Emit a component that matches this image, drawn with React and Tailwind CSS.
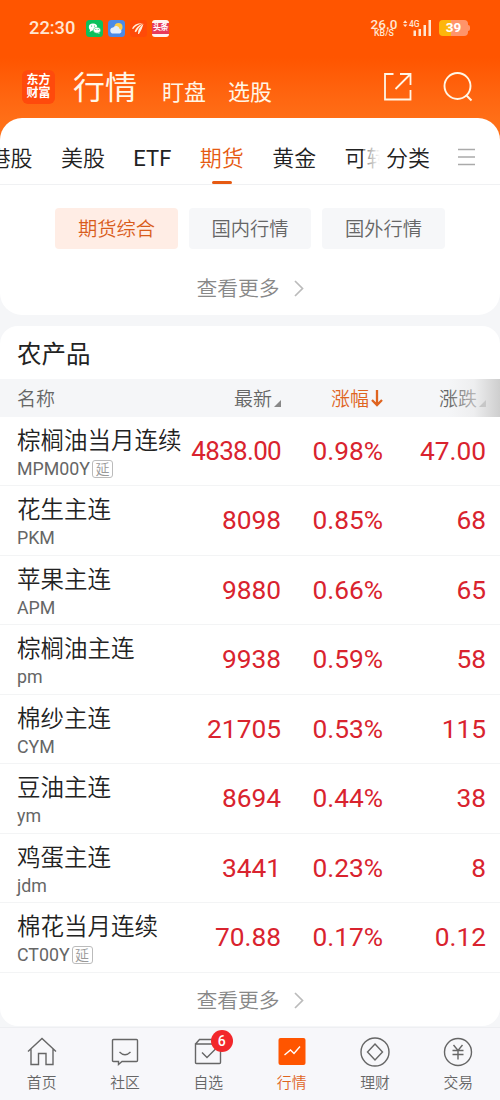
import React, { useState } from 'react';

const MARKET_TABS = ['港股', '美股', 'ETF', '期货', '黄金', '可转'];

const CATEGORIES = ['期货综合', '国内行情', '国外行情'];

const FUTURES = [
  { name: '棕榈油当月连续', code: 'MPM00Y', delayed: true, price: '4838.00', percent: '0.98%', change: '47.00' },
  { name: '花生主连', code: 'PKM', price: '8098', percent: '0.85%', change: '68' },
  { name: '苹果主连', code: 'APM', price: '9880', percent: '0.66%', change: '65' },
  { name: '棕榈油主连', code: 'pm', price: '9938', percent: '0.59%', change: '58' },
  { name: '棉纱主连', code: 'CYM', price: '21705', percent: '0.53%', change: '115' },
  { name: '豆油主连', code: 'ym', price: '8694', percent: '0.44%', change: '38' },
  { name: '鸡蛋主连', code: 'jdm', price: '3441', percent: '0.23%', change: '8' },
  { name: '棉花当月连续', code: 'CT00Y', delayed: true, price: '70.88', percent: '0.17%', change: '0.12' }
];

const StatusBar = () => (
  <div className="flex h-14 items-center pl-[29px] pr-[30px] text-[#ffe6d2]">
    <span className="w-[57px] text-[18.3px] leading-none font-medium">22:30</span>
    <div className="flex gap-[5px]">
      <svg className="h-[17px] w-[17px]" viewBox="0 0 17 17">
        <rect width="17" height="17" rx="3.5" fill="#0bc15c" />
        <ellipse cx="7" cy="7" rx="4.2" ry="3.6" fill="#fff" />
        <path d="M4.2 9.5 3.6 12 6.5 10.4zM12.5 12l1.2 1.9-2.8-1.2z" fill="#fff" />
        <ellipse cx="11" cy="10.2" rx="3.6" ry="3" fill="#fff" stroke="#0bc15c" strokeWidth=".5" />
        <g fill="#0bc15c">
          <circle cx="5.6" cy="6" r=".6" />
          <circle cx="8.5" cy="6" r=".6" />
          <circle cx="9.9" cy="9.5" r=".5" />
          <circle cx="12.2" cy="9.5" r=".5" />
        </g>
      </svg>
      <svg className="h-[17px] w-[17px]" viewBox="0 0 17 17">
        <rect width="17" height="17" rx="3.5" fill="#4b8ae6" />
        <circle cx="10.5" cy="7" r="4" fill="#ffce45" />
        <path d="M5.5 13.5a3 3 0 0 1-.4-6 3.6 3.6 0 0 1 6.5 1.4 2.4 2.4 0 0 1 .3 4.6z" fill="#e4eefb" />
      </svg>
      <svg className="h-[17px] w-[17px]" viewBox="0 0 17 17">
        <rect width="17" height="17" rx="3.5" fill="#ff4a08" />
        <g fill="#fff1df">
          <path d="M2 8.6Q4.5 3 12.5 3.3 6 5 3.2 9z" />
          <path d="M4.6 11.6Q6 6.3 13 3.4 8.5 7.2 6 12.3z" />
          <path d="M8 14Q7.5 8.4 13.5 3.7 12.3 9 9 14z" />
        </g>
      </svg>
      <div className="flex h-[17px] w-[17px] flex-col justify-center overflow-hidden rounded-[3px] bg-[#fff4f0]">
        <div className="flex h-[11px] items-center justify-center bg-[#e83b59] text-[8px] leading-none font-bold tracking-[-0.5px] whitespace-nowrap text-white">
          头条
        </div>
      </div>
    </div>
    <div className="ml-auto flex items-center">
      <div className="w-[28px] text-center font-medium">
        <div className="text-[13.5px] leading-[10px]">26.0</div>
        <div className="text-[8.8px] leading-[9px]">KB/S</div>
      </div>
      <svg className="ml-[4px] h-[18px] w-[31px]" viewBox="0 0 31 18" fill="#ffe6d2">
        <path d="M1 4 3.2 1.2 5.4 4zM1 5.5h4.4L3.2 8z" />
        <text x="7" y="8" fontSize="8.5" fontWeight="500">4G</text>
        <path d="M11.5 11.5h2.5v5.5h-2.5zM16.5 10h2.5v7h-2.5zM21.500 6h2.500v11h-2.500zM26.500 1h2.500v16h-2.500z" />
      </svg>
      <div className="ml-[6px] flex h-4 w-[29px] items-center justify-center rounded-[4px] bg-linear-to-r from-[#fdb60b] from-40% to-[#ff946a] to-40% text-[13.5px] leading-none font-bold text-white">
        39
      </div>
      <div className="h-[6px] w-[2px] rounded-r-sm bg-[#ff946a]" />
    </div>
  </div>
);

const TopNav = () => (
  <div className="flex h-[62px] items-end pr-[26px] pl-[22px] text-[#fff6e6]">
    <div className="mb-[14px] flex h-[34px] w-[33px] flex-col items-center justify-center rounded-[6px] bg-[#ff4a0c] text-[12px] leading-[13.5px] font-bold text-white">
      <span>东方</span>
      <span>财富</span>
    </div>
    <span className="mb-[11px] ml-[18px] text-[32px] leading-[38px]">行情</span>
    <span className="mb-[11px] ml-[25px] text-[22px] leading-7">盯盘</span>
    <span className="mb-[11px] ml-[22px] text-[22px] leading-7">选股</span>
    <svg className="mb-[17px] ml-auto h-[29px] w-[29px]" viewBox="0 0 29 29" fill="none" stroke="currentColor" strokeWidth="1.8">
      <path d="M10.5 2H2v25.5h25.5V18M12.5 17 27 2.5M17 2h10.5v11" />
    </svg>
    <svg className="mb-[15px] ml-[30px] h-[32px] w-[32px]" viewBox="0 0 32 32" fill="none" stroke="currentColor" strokeWidth="1.9">
      <circle cx="15.5" cy="15" r="13" />
      <path d="m24 24 5.5 5.5" />
    </svg>
  </div>
);

const MarketTabs = () => {
  const [active, setActive] = useState('期货');

  return (
    <div className="flex h-[67px] border-b border-[#f0f1f3] text-[22px] leading-[81px] text-[#222]">
      <div className="relative flex w-[380px] gap-[28.4px] overflow-hidden">
        {MARKET_TABS.map(tab => (
          <button
            key={tab}
            onClick={() => setActive(tab)}
            className={`relative shrink-0 first:-ml-[11.5px] ${tab === 'ETF' ? 'font-normal' : ''} ${active === tab ? 'text-[#e65a12]' : ''}`}
          >
            {tab}
            {active === tab && (
              <span className="absolute bottom-0 left-1/2 h-[3px] w-5 -translate-x-1/2 rounded-full bg-[#e65a12]" />
            )}
          </button>
        ))}
        <div className="absolute inset-y-0 right-0 w-[17px] bg-linear-to-r from-white/40 to-white" />
      </div>
      <span className="ml-[6px]">分类</span>
      <svg className="mt-[30px] ml-[28px] h-[18px] w-[17px]" viewBox="0 0 17 18" stroke="#aaa" strokeWidth="1.6">
        <path d="M0 1.5h17M0 9h17M0 16.5h17" />
      </svg>
    </div>
  );
};

const MoreLink = () => (
  <button className="flex w-full items-center justify-center text-[20.8px] leading-7 text-[#888]">
    查看更多
    <svg className="mb-px ml-[14px] h-[17px] w-[10px]" viewBox="0 0 10 17" fill="none" stroke="#bbb" strokeWidth="1.7">
      <path d="m1 1 7.5 7.5L1 16" />
    </svg>
  </button>
);

const SortCorner = () => (
  <svg className="mt-[8px] ml-[2px] h-[7px] w-[7px]" viewBox="0 0 7 7">
    <path d="M7 0v7H0z" fill="#888" />
  </svg>
);

const FuturesRow = ({ item }) => (
  <div className="flex h-[69.45px] border-b border-[#f3f4f5] pr-[14px] pl-[17px]">
    <div className="w-[166px] shrink-0 pt-[9px] whitespace-nowrap">
      <div className="text-[23.5px] leading-[31px] text-[#222]">{item.name}</div>
      <div className="flex items-center text-[17.8px] leading-[23px] font-normal text-[#666]">
        {item.code}
        {item.delayed && (
          <span className="mt-px ml-[2px] flex h-[18px] w-[21px] items-center justify-center rounded-[3px] border border-[#bbb] text-[14px] leading-none font-[350] text-[#999]">
            延
          </span>
        )}
      </div>
    </div>
    <div className="flex flex-1 text-right text-[26.3px] leading-[69px] font-normal text-[#d9232e]">
      <span className={`w-[98px] ${item.price.length > 6 ? 'text-[26px] tracking-[-0.7px]' : ''}`}>{item.price}</span>
      <span className="w-[102px]">{item.percent}</span>
      <span className="flex-1">{item.change}</span>
    </div>
  </div>
);

const NAV_ITEMS = [
  {
    label: '首页',
    icon: <path d="M1 14.5 15 1.5l14 13M4 12v15.5h7.5V16.5h7.5v11H26V12" />
  },
  {
    label: '社区',
    icon: (
      <>
        <path d="M3.500 2.500h23q1 0 1 1v20q0 1-1 1H12l-3.500 3v-3h-5q-1 0-1-1v-20q0-1 1-1z" />
        <path d="M9.500 15q5.500 5.500 11 0" />
      </>
    )
  },
  {
    label: '自选',
    badge: 6,
    icon: <path d="M2.5 7 6.5 2.5h17l4 4.5M2.5 7h25v18.5q0 1-1 1h-23q-1 0-1-1zM9 15.500l5 5 8.500-8.500" />
  },
  {
    label: '行情',
    icon: (
      <>
        <rect x="1.5" y="1" width="27" height="27" rx="2" fill="#ff5500" stroke="none" />
        <path d="m7.5 18 6-5 3.5 3.5L23 9.5" stroke="#fff" />
      </>
    )
  },
  {
    label: '理财',
    icon: (
      <>
        <circle cx="15" cy="15" r="14" />
        <path d="m15 7 7.5 8L15 23l-7.5-8z" />
      </>
    )
  },
  {
    label: '交易',
    icon: (
      <>
        <circle cx="15" cy="15" r="13.5" />
        <path d="m10.5 8 4.5 5.500L19.500 8M9.500 13.500h11M9.500 17.500h11M15 13.500V22.500" />
      </>
    )
  }
];

const BottomNav = () => {
  const [current, setCurrent] = useState('行情');

  return (
    <nav className="grid h-[73px] grid-cols-6 border-t border-[#eeeff2] bg-[#f7f7fa]">
      {NAV_ITEMS.map(({ label, icon, badge }) => (
        <button
          key={label}
          onClick={() => setCurrent(label)}
          className={`relative flex flex-col items-center pt-[9px] text-[14.8px] leading-5 ${current === label ? 'text-[#df641f]' : 'text-[#666]'}`}
        >
          <svg className="mb-[6px] h-[30px] w-[30px] shrink-0" viewBox="0 0 30 30" fill="none" stroke="currentColor" strokeWidth="1.4">
            {icon}
          </svg>
          {label}
          {badge && (
            <span className="absolute top-[2px] left-[44px] flex h-[22px] w-[22px] items-center justify-center rounded-full bg-[#f2272b] text-[14px] leading-none font-medium text-white">
              {badge}
            </span>
          )}
        </button>
      ))}
    </nav>
  );
};

const App = () => {
  const [category, setCategory] = useState('期货综合');

  return (
    <div className="flex h-[1100px] w-[500px] flex-col overflow-hidden bg-[#f5f6f8] font-['Roboto','Noto_Sans_CJK_SC',sans-serif] font-[350]">
      <header className="h-[145px] shrink-0 bg-linear-to-b from-[#ff5500] from-40% to-[#ff7018] to-85% font-normal">
        <StatusBar />
        <TopNav />
      </header>

      <section className="-mt-[27px] h-[197px] shrink-0 rounded-[22px] bg-white">
        <MarketTabs />
        <div className="flex justify-center gap-[11px] pt-[23px]">
          {CATEGORIES.map(item => (
            <button
              key={item}
              onClick={() => setCategory(item)}
              className={`h-[41px] w-[122.5px] rounded-[4px] pt-[3px] text-[19.3px] ${category === item ? 'bg-[#ffede5] text-[#d95c1c]' : 'bg-[#f6f7f9] text-[#666]'}`}
            >
              {item}
            </button>
          ))}
        </div>
        <div className="pt-[26px]">
          <MoreLink />
        </div>
      </section>

      <section className="mt-[11px] h-[700px] shrink-0 rounded-[18px] bg-white">
        <h2 className="h-[53px] pl-[17px] text-[24.5px] leading-[58px] font-normal text-[#222]">农产品</h2>
        <div className="relative flex h-[38px] items-center bg-[#f5f6f8] pt-[2px] pl-[17px] text-[19px] leading-none text-[#666]">
          <span className="w-[166px]">名称</span>
          <span className="flex w-[98px] items-center justify-end">最新<SortCorner /></span>
          <span className="flex w-[102px] items-center justify-end text-[#df641f]">
            涨幅
            <svg className="mb-[2px] ml-[2px] h-[18px] w-[12px]" viewBox="0 0 12 18" fill="none" stroke="currentColor" strokeWidth="2.3">
              <path d="M6 1v15M1 11l5 5 5-5" />
            </svg>
          </span>
          <span className="flex w-[103px] items-center justify-end">涨跌<SortCorner /></span>
          <div className="absolute inset-y-0 right-0 w-[52px] bg-linear-to-r from-[#f5f6f8]/0 via-[#e9e9ea]/60 to-[#cecece]" />
        </div>
        {FUTURES.map(item => <FuturesRow key={item.code} item={item} />)}
        <div className="pt-[14px]">
          <MoreLink />
        </div>
      </section>

      <div className="mt-auto">
        <BottomNav />
      </div>
    </div>
  );
};

export default App;
